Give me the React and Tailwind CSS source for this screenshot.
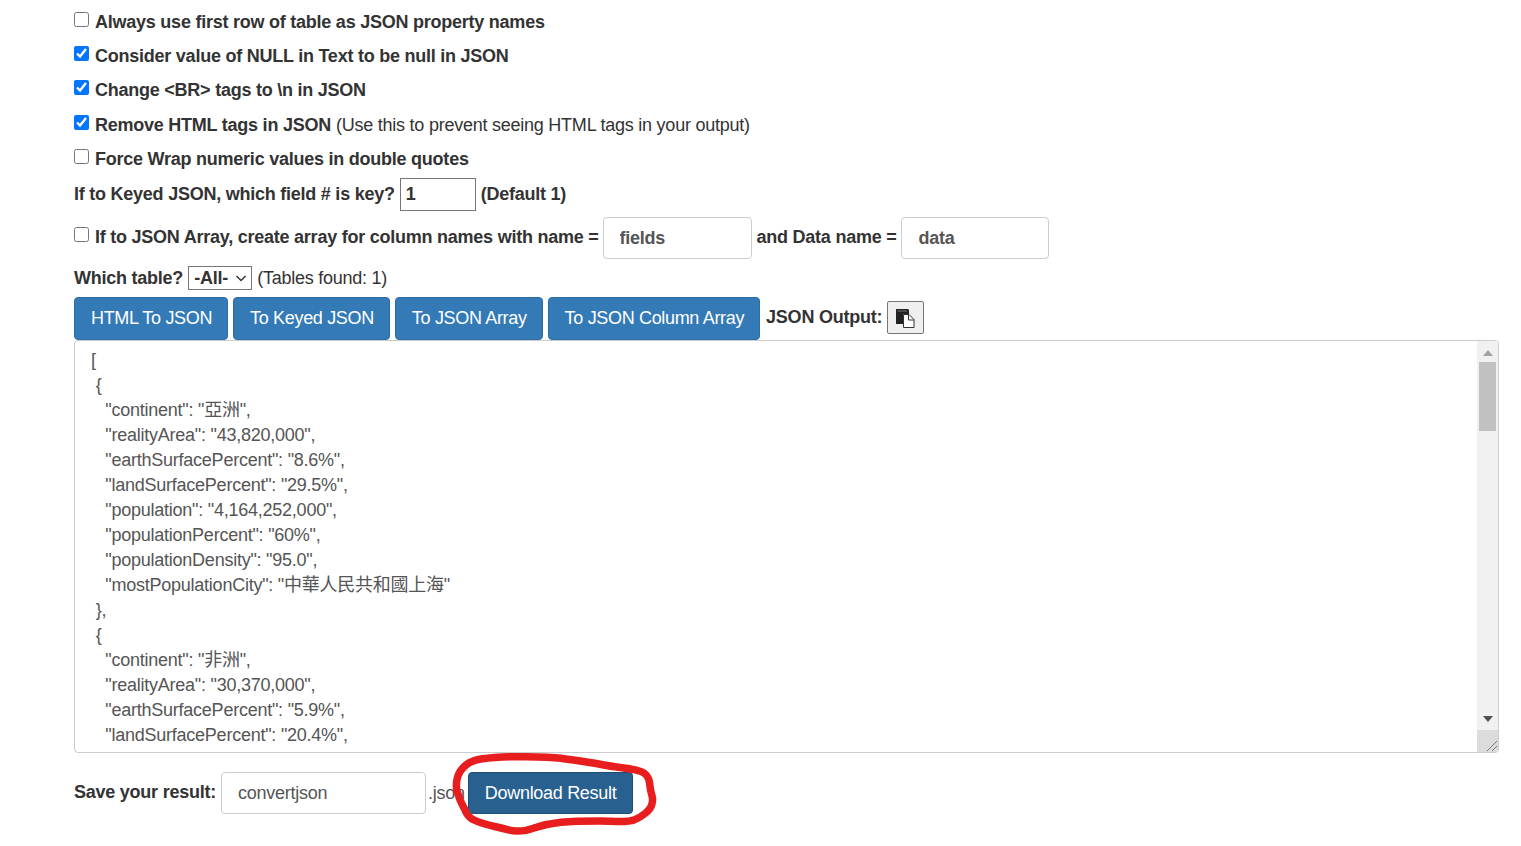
const FONT = "font-['Liberation_Sans','Noto_Sans_CJK_TC',sans-serif]"

const JSON_LINES = [
  '[',
  ' {',
  '   "continent": "亞洲",',
  '   "realityArea": "43,820,000",',
  '   "earthSurfacePercent": "8.6%",',
  '   "landSurfacePercent": "29.5%",',
  '   "population": "4,164,252,000",',
  '   "populationPercent": "60%",',
  '   "populationDensity": "95.0",',
  '   "mostPopulationCity": "中華人民共和國上海"',
  ' },',
  ' {',
  '   "continent": "非洲",',
  '   "realityArea": "30,370,000",',
  '   "earthSurfacePercent": "5.9%",',
  '   "landSurfacePercent": "20.4%",',
]

const ACTIONS = ['HTML To JSON', 'To Keyed JSON', 'To JSON Array', 'To JSON Column Array']

function Check({ label, note, checked, className }) {
  return (
    <label className={`flex h-[34px] items-center ${className || ''}`}>
      <input type="checkbox" defaultChecked={checked} className="mr-[6px] h-[15px] w-[15px] -translate-y-[3px] accent-[#0075ff]" />
      <span className="font-bold">{label}</span>
      {note && <span className="ml-[5px]">{note}</span>}
    </label>
  )
}

function TextBox({ value, className }) {
  return (
    <input
      readOnly
      value={value}
      className={`h-[42px] rounded-[4px] border border-[#ccc] bg-white px-[16px] text-[18px] text-[#555] outline-none ${className || ''}`}
    />
  )
}

function PasteIcon() {
  return (
    <svg width="19" height="20" viewBox="0 0 19 20" aria-hidden="true">
      <path d="M0 1h11.500c.8 0 1.500.7 1.500 1.500V6H7v10H0z" fill="#222" />
      <path d="M1.500 2.500h9.500v1H1.500z" fill="#777" />
      <path d="M7.500 6.500H13l5 5v8H7.500z" fill="#fff" stroke="#333" />
      <path d="M12.500 6.500v5.500H18" fill="none" stroke="#333" />
    </svg>
  )
}

function RedLoop() {
  return (
    <svg className="pointer-events-none absolute left-[449px] top-[750px]" width="210" height="90" viewBox="0 0 210 90" fill="none" aria-hidden="true">
      <path
        d="M32 9C44 7 56 6.500 68 6.700S98 6.500 112 8.300 141 12 155 15 188 18 195 23 200 35 202 42 204 50 202.700 55 193 67 185 70 163 71 152 71 125 71 112 72.300 94 75 85 78 74 81 68 81 60 80 52 78 33 74 25 70 18 63 15 58 10 48 8.300 42 7 33 8.300 28 12 19 17 15 25 10 32 9Z"
        stroke="#e81e1e"
        strokeWidth="7.500"
        strokeLinejoin="round"
      />
    </svg>
  )
}

export default function App() {
  return (
    <div className={`relative h-[846px] w-[1521px] overflow-hidden bg-white pl-[74px] pr-[22px] pt-[5px] text-[18px] leading-[25px] tracking-[-0.24px] text-[#333] ${FONT}`}>
      <Check label="Always use first row of table as JSON property names" />
      <Check checked label="Consider value of NULL in Text to be null in JSON" />
      <Check checked label="Change <BR> tags to \n in JSON" />
      <Check checked label="Remove HTML tags in JSON" note="(Use this to prevent seeing HTML tags in your output)" className="mt-[1px]" />
      <Check label="Force Wrap numeric values in double quotes" />

      <div className="mt-[2px] flex h-[33px] items-center">
        <span className="font-bold">If to Keyed JSON, which field # is key?</span>
        <input readOnly value="1" className="ml-[5px] h-[33px] w-[76px] border border-[#767676] bg-white px-[5px] font-bold outline-none" />
        <span className="ml-[5px] font-bold">(Default 1)</span>
      </div>

      <div className="mt-[6px] flex h-[42px] items-center font-bold">
        <input type="checkbox" className="mr-[6px] h-[15px] w-[15px] -translate-y-[4px]" />
        <span className="-mt-[2px]">If to JSON Array, create array for column names with name =</span>
        <TextBox value="fields" className="ml-[4px] w-[149px] font-bold" />
        <span className="-mt-[2px] ml-[5px]">and Data name =</span>
        <TextBox value="data" className="ml-[5px] w-[148px] font-bold" />
      </div>

      <div className="mt-[7px] flex h-[24px] items-center">
        <span className="font-bold">Which table?</span>
        <div className="ml-[5px] flex h-[24px] w-[64px] items-center justify-between border border-[#767676] pl-[5px] pr-[4px] font-bold">
          -All-
          <svg width="12" height="12" viewBox="0 0 12 12" fill="none" stroke="#333" strokeWidth="1.500">
            <path d="M1.500 4 6 8.500 10.500 4" />
          </svg>
        </div>
        <span className="ml-[5px]">(Tables found: 1)</span>
      </div>

      <div className="mt-[7px] flex h-[43px] items-center gap-[5px]">
        {ACTIONS.map((a) => (
          <button key={a} className="h-[43px] rounded-[4px] border border-[#2e6da4] bg-[#337ab7] pl-[16px] pr-[15px] text-[18px] tracking-[-0.33px] text-white">
            {a}
          </button>
        ))}
        <span className="-mt-[2px] ml-[1px] font-bold">JSON Output:</span>
        <button className="-mt-[2px] flex h-[33px] w-[37px] items-center justify-center rounded-[2px] border border-[#767676] bg-[#efefef]">
          <PasteIcon />
        </button>
      </div>

      <div className="flex h-[413px] overflow-hidden rounded-[4px] border border-[#ccc]">
        <pre className={`min-w-0 flex-1 overflow-hidden px-[16px] pt-[7px] text-[18px] leading-[25px] text-[#555] ${FONT}`}>
          {JSON_LINES.join('\n')}
        </pre>
        <div className="flex w-[21px] flex-col items-center bg-[#f1f1f1]">
          <svg className="mt-[9px]" width="10" height="6" viewBox="0 0 10 6"><path d="M5 0l5 6H0z" fill="#a3a3a3" /></svg>
          <div className="mt-[6px] h-[69px] w-[17px] bg-[#c1c1c1]" />
          <svg className="mt-auto" width="10" height="6" viewBox="0 0 10 6"><path d="M0 0h10L5 6z" fill="#505050" /></svg>
          <div className="mt-[8px] flex h-[22px] w-[21px] items-end justify-end bg-[#dcdcdc]">
            <svg width="12" height="12" viewBox="0 0 12 12" stroke="#777" fill="none"><path d="M1 11 11 1M6 11l5-5" /></svg>
          </div>
        </div>
      </div>

      <div className="mt-[19px] flex h-[42px] items-center">
        <span className="-mt-[2px] font-bold">Save your result:</span>
        <TextBox value="convertjson" className="ml-[5px] w-[205px]" />
        <span className="ml-[2px] text-[#555]">.json</span>
        <button className="ml-[3px] h-[42px] rounded-[4px] border border-[#204d74] bg-[#286090] px-[16px] text-[18px] tracking-[-0.3px] text-white">
          Download Result
        </button>
      </div>

      <RedLoop />
    </div>
  )
}
